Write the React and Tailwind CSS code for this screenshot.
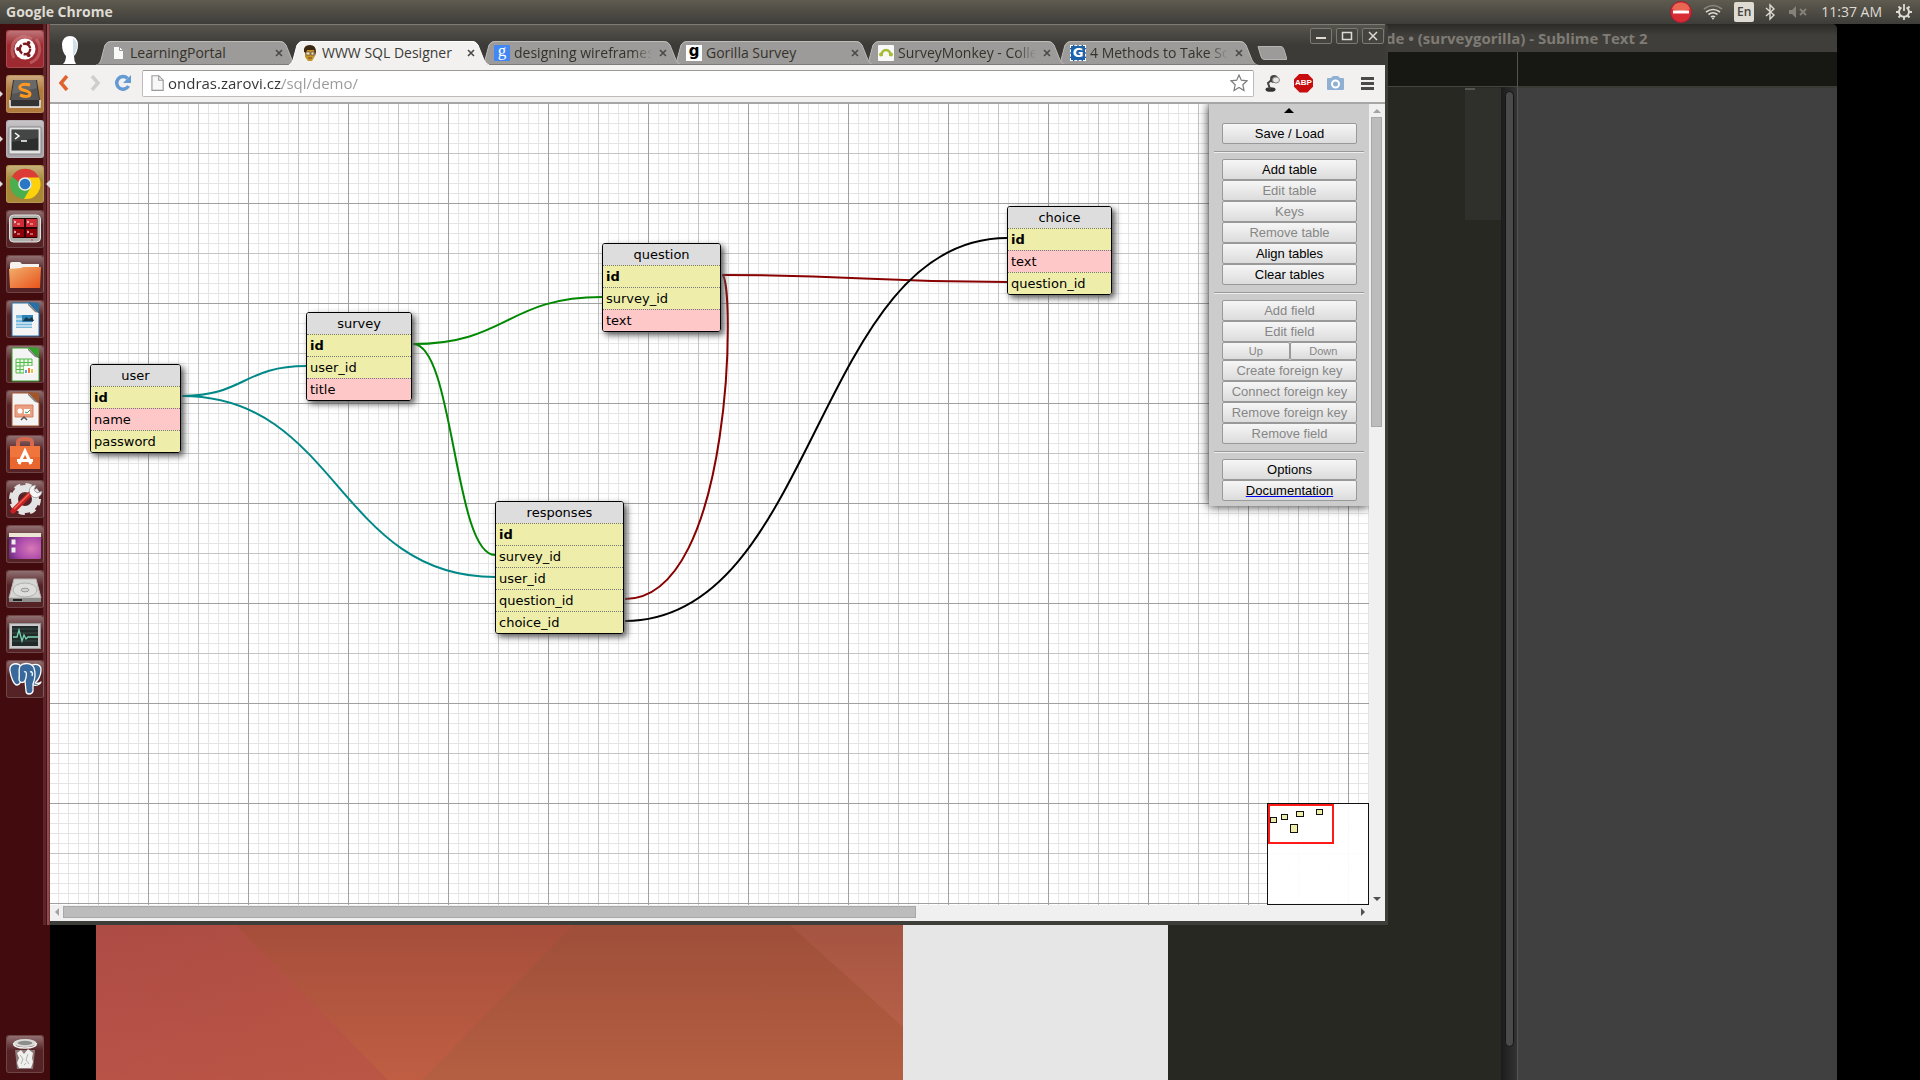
import React from "react";

const UI = "font-['Open_Sans','Noto_Sans',sans-serif]";

/* ---------- launcher ---------- */

function Tile({ label, tint = "bg-white/10", running, active, children }) {
  return (
    <li className="relative h-[38px] w-full pl-[6px]">
      {running && (
        <svg className="absolute left-0 top-[15px]" width="4" height="8" viewBox="0 0 4 8"><path d="M0 1l3 3-3 3z" fill="#ddd" /></svg>
      )}
      {active && (
        <svg className="absolute right-0 top-[15px]" width="4" height="8" viewBox="0 0 4 8"><path d="M4 0L0 4l4 4z" fill="#ddd" /></svg>
      )}
      <button aria-label={label} className={`block h-[38px] w-[38px] rounded-[3px] border border-white/15 ${tint}`}>
        <span className="block h-full w-full rounded-[3px] bg-linear-to-b from-white/35 to-transparent to-40%">
          <svg width="36" height="36" viewBox="1 1 36 36">{children}</svg>
        </span>
      </button>
    </li>
  );
}

function Doc({ color, children }) {
  return (
    <>
      <path d="M6 3h17l10 10v23H6z" fill="#f4f4f4" stroke={color} />
      <path d="M22 2l11 11V3z" fill={color} />
      <path d="M22 3l11 10-4-1-7-7z" fill="#333" opacity=".6" />
      {children}
    </>
  );
}

function Launcher() {
  return (
    <nav aria-label="Launcher" className="relative z-20 flex w-[50px] shrink-0 flex-col justify-between bg-[#420b0e] pt-[6px] pb-[7px]">
      <div className="absolute top-0 right-0 bottom-[155px] flex w-[7px]">
        <span className="w-[3px] bg-[#5a2629]" />
        <span className="w-px bg-[#471013]" />
        <span className="w-[2px] bg-[#8d4d50]" />
        <span className="w-px bg-[#7b3337]" />
      </div>
      <ul className="relative flex flex-col gap-[7px]">
        <Tile label="Dash" tint="bg-[#9c2a30]">
          <path d="M8 28C3 18 8 7 20 6M30 9c6 8 5 20-6 24M6 16c3-8 12-12 20-7" fill="none" stroke="#d98b8f" strokeWidth="3" opacity=".45" />
          <circle cx="19" cy="19" r="10.5" fill="#fff" />
          <circle cx="19" cy="19" r="5.2" fill="none" stroke="#7c1a20" strokeWidth="2.4" strokeDasharray="9.4 1.5" />
          <circle cx="12" cy="19" r="1.9" fill="#7c1a20" /><circle cx="22.6" cy="12.8" r="1.9" fill="#7c1a20" /><circle cx="22.6" cy="25.2" r="1.9" fill="#7c1a20" />
        </Tile>
        <Tile label="Sublime Text" tint="bg-[#b07a3c]" running>
          <path d="M7 5h24l4 27H3z" fill="#333" /><path d="M4 25v7h30v-7" fill="none" stroke="#f4f4f4" strokeWidth="1.5" />
          <path d="M8 5h22l3 20H5z" fill="#555" /><path d="M8 5h22l1 8L6 19z" fill="#777" opacity=".6" />
          <path d="M24 10c-8-2-11 1-10 3 1 3 10 2 10 6 0 3-5 3-10 1" fill="none" stroke="#ff9a1f" strokeWidth="3" />
        </Tile>
        <Tile label="Terminal" tint="bg-[#aaa5aa]" running>
          <rect x="3" y="7" width="32" height="27" rx="1" fill="#e3e3e3" stroke="#888" />
          <rect x="5.500" y="9.500" width="27" height="21" fill="#2c2e2d" /><path d="M6 10h26v8L6 22z" fill="#555" opacity=".6" />
          <path d="M9 13l4 3-4 3M15 21h6" fill="none" stroke="#fff" strokeWidth="1.5" />
        </Tile>
        <Tile label="Google Chrome" tint="bg-[#a98736]" running active>
          <circle cx="19" cy="19" r="15" fill="#4bae4f" />
          <path d="M6 11.500A15 15 0 0 1 33 13H19a6.500 6.500 0 0 0-6 4z" fill="#dd3b36" />
          <path d="M19 12.500h14A15 15 0 0 1 18 34l7-12a6.500 6.500 0 0 0-6-9.500z" fill="#fdd20d" />
          <circle cx="19" cy="19" r="6.800" fill="#eee" /><circle cx="19" cy="19" r="5.300" fill="#2a77c6" />
        </Tile>
        <Tile label="Terminator">
          <rect x="3.500" y="5" width="31" height="27" rx="4" fill="#aeb0ac" stroke="#e3e3e0" />
          <rect x="6.500" y="8" width="25" height="20" rx="1" fill="#2a0000" />
          <path d="M7 9h11v8H7zM20 9h11v8H20z" fill="#d02c36" /><path d="M7 19h11v8H7zM20 19h11v8H20z" fill="#8e0008" />
          <path d="M8 11l2 1-2 1M11 14h3M21 11l2 1-2 1M24 14h3M8 21l2 1-2 1M11 24h3M21 21l2 1-2 1M24 24h3" stroke="#fff" fill="none" strokeWidth=".8" />
          <path d="M25 30h2" stroke="#f33" />
        </Tile>
        <Tile label="Files">
          <path d="M4 9q0-2 2-2h8l2 2h17v6H4z" fill="#f5f2f0" />
          <path d="M3 14l12-1 2-1h18l-1 21H4z" fill="url(#folder)" />
        </Tile>
        <Tile label="LibreOffice Writer">
          <Doc color="#2672a8"><path d="M10 15h16v13H10z" fill="#7bb9dc" /><path d="M16 15h11v7H16z" fill="#2b83b8" /><path d="M17 21l3-4 3 2 3-2 2 4z" fill="#17374a" /><path d="M10 19h6M10 23h17M10 26h17" stroke="#fff" /></Doc>
        </Tile>
        <Tile label="LibreOffice Calc">
          <Doc color="#35a22c"><path d="M10 14h16v14H10z" fill="#e8f8e5" stroke="#55b84a" /><path d="M10 17.500h16M10 21h16M10 24.500h16M14 14v14M18 14v14M22 14v14" stroke="#55b84a" /><path d="M18 21h10v8H18z" fill="#fff" /><path d="M20 28v-3" stroke="#5ba3dd" strokeWidth="2" /><path d="M23 28v-5" stroke="#f27a3c" strokeWidth="2" /><path d="M26 28v-4" stroke="#e8c23a" strokeWidth="2" /></Doc>
        </Tile>
        <Tile label="LibreOffice Impress">
          <Doc color="#a3552a"><path d="M9 15h18v12H9z" fill="#eba083" stroke="#d87e5c" /><circle cx="14" cy="21" r="2.500" fill="#fff" /><path d="M18 19h6v5h-6z" fill="#fff" /><path d="M19 22l2 1 3-3" stroke="#3b9a46" fill="none" /><path d="M15 30l3-3 3 3" stroke="#555" fill="none" strokeWidth="1.500" /></Doc>
        </Tile>
        <Tile label="Software Center">
          <path d="M12 13V7q0-3 7-3t7 3v6" fill="none" stroke="#d4694d" strokeWidth="4" />
          <path d="M4 11h30v23H4z" fill="#e9672f" /><path d="M4 11h30v11H4z" fill="#f5834a" opacity=".5" />
          <path d="M13 29l6-13 6 13M11 25.500h16" fill="none" stroke="#fff" strokeWidth="3" />
        </Tile>
        <Tile label="System Settings">
          <circle cx="19" cy="19" r="10.500" fill="none" stroke="#e4e4e4" strokeWidth="7" /><circle cx="19" cy="19" r="14" fill="none" stroke="#e4e4e4" strokeWidth="4" strokeDasharray="6 5" />
          <path d="M7 31L25 13" stroke="#c92121" strokeWidth="5" strokeLinecap="round" /><path d="M8 29L23 14" stroke="#ef6a5a" strokeWidth="1.500" />
          <path d="M24 14c-2-5 1-9 6-9l-2 5 3 3 5-2c0 5-5 8-9 6z" fill="#f6f6f6" stroke="#888" strokeWidth=".7" />
        </Tile>
        <Tile label="Unity Tweak Tool">
          <rect x="3" y="8" width="32" height="26" rx="1" fill="url(#purple)" /><path d="M3 8h32v4H3z" fill="#ece7d5" />
          <rect x="5.500" y="14.500" width="4" height="5" fill="#eee" /><rect x="5.500" y="22.500" width="4" height="5" fill="#eee" />
        </Tile>
        <Tile label="Drive">
          <path d="M8 9h22l5 19H3z" fill="#d5d5d3" stroke="#b5b5b3" /><path d="M3 28h32v4H3z" fill="#8f908e" /><path d="M7 29h9v2H7z" fill="#222" />
          <ellipse cx="19" cy="20" rx="12" ry="7" fill="#dededc" stroke="#b0b0ae" /><ellipse cx="19" cy="20" rx="4" ry="1.800" fill="#d0d0d0" stroke="#999" />
        </Tile>
        <Tile label="System Monitor">
          <rect x="3.500" y="8.500" width="31" height="25" fill="#c9c9c9" stroke="#999" /><rect x="6" y="11" width="26" height="20" fill="#1f2a29" />
          <path d="M6 14h26M6 18h26M6 26h26" stroke="#3b4a49" /><path d="M7 22h4l2-7 3 11 2-6 2 4 2-2h10" fill="none" stroke="#79d3b0" strokeWidth="1.300" />
        </Tile>
        <Tile label="pgAdmin III">
          <g fill="#38699a" stroke="#fff" strokeWidth="1.300" strokeLinejoin="round">
            <path d="M24 6c5-3 11-2 11 4 0 5-3 11-6 13 2 1 5 0 6-1-1 3-5 4-8 3z" />
            <path d="M14 5C8 2 3 5 4 11c1 7 4 14 7 14 3 0 3-3 5-5z" />
            <path d="M14 6c4-4 12-3 14 2 2 6 1 11-1 16v7c-1 4-7 4-7 0l-1-10c-3 3-6 1-6-2 1-5-1-9 1-13z" />
            <path d="M18 12c3-2 3 4 1 9M24 12c2-1 3 1 2 4" fill="none" />
          </g>
        </Tile>
      </ul>
      <ul className="relative">
        <Tile label="Trash">
          <path d="M9 15h20l-2 19H11z" fill="#9c8f90" opacity=".8" />
          <ellipse cx="19" cy="8" rx="11.500" ry="4" fill="#dcdddb" />
          <ellipse cx="19" cy="8" rx="7.500" ry="2.200" fill="#8d8e8c" />
          <path d="M7.500 8q0 5 11.500 5t11.500-5" fill="none" stroke="#f5f5f5" strokeWidth="1.500" />
          <path d="M11 18l4-3 3 4 4-5 5 4-1 5 1 4-2 6H13l-2-5 2-5z" fill="#efefed" />
          <path d="M14 20l3 4-2 5M22 19l-2 6 3 4M18 30l2-2" fill="none" stroke="#b4b4b2" />
        </Tile>
      </ul>
      <svg width="0" height="0" className="absolute">
        <defs>
          <linearGradient id="folder" x1="0" y1="0" x2="1" y2="1"><stop stopColor="#f1b06e" /><stop offset="1" stopColor="#e8521b" /></linearGradient>
          <radialGradient id="purple" cx=".7" cy=".6" r=".8"><stop stopColor="#d979b6" /><stop offset=".6" stopColor="#a646a9" /><stop offset="1" stopColor="#5c2a78" /></radialGradient>
        </defs>
      </svg>
    </nav>
  );
}

/* ---------- top menu bar ---------- */

function MenuBar() {
  return (
    <header className={`flex h-6 shrink-0 items-center justify-between bg-linear-to-b from-[#5f5b50] to-[#3e3d39] text-[#dfdbd2] ${UI}`}>
      <h1 className="pl-[6px] text-[14px] leading-6 font-bold">Google Chrome</h1>
      <div className="flex items-center gap-[11px] pr-[8px]">
        <svg width="22" height="22" viewBox="0 0 22 22"><circle cx="11" cy="11" r="10.500" fill="#d92b33" stroke="#a81d35" /><path d="M2 8a9.500 9.500 0 0 1 18 0q-9 4-18 0" fill="#f0825f" opacity=".7" /><path d="M3 9.500h16v3H3z" fill="#fff" /></svg>
        <svg width="20" height="16" viewBox="0 0 20 16" fill="none" strokeWidth="1.600"><path d="M1 5q9-7 18 0" stroke="#8b877e" /><path d="M3 8q7-5 14 0M5.500 10.500q4.500-3.500 9 0M8 13q2-1.500 4 0" stroke="#dfdbd2" /><circle cx="10" cy="14.500" r="1" fill="#dfdbd2" /></svg>
        <span className="h-5 w-5 rounded-[2px] bg-[#dfdbd2] text-center text-[12px] leading-[20px] font-semibold text-[#45443f]">En</span>
        <svg width="10" height="18" viewBox="0 0 10 18" fill="none" stroke="#dfdbd2" strokeWidth="1.400"><path d="M1 5l8 7-4 4V2l4 4-8 7" /></svg>
        <svg className="ml-[3px]" width="18" height="12" viewBox="0 0 18 12"><path d="M0 4h3l4-4v12L3 8H0z" fill="#85827a" /><path d="M11 3l6 6M17 3l-6 6" stroke="#85827a" strokeWidth="1.800" /></svg>
        <time className="ml-[3px] text-[14px] leading-6 whitespace-nowrap">11:37 AM</time>
        <svg className="ml-[3px]" width="16" height="16" viewBox="0 0 16 16" fill="none" stroke="#dfdbd2"><path d="M5.500 3.500a5 5 0 1 0 5 0" strokeWidth="2" /><path d="M8 0v7" strokeWidth="1.800" /><path d="M0 8h3M13 8h3M2.500 13.500l2-2M13.500 13.500l-2-2M8 13v3M2.500 2.500l2 2M13.500 2.500l-2 2" strokeWidth="1.800" /></svg>
      </div>
    </header>
  );
}

/* ---------- browser chrome ---------- */

const PageIcon = ({ w = 16 }) => (
  <svg width={w} height={w} viewBox="0 0 16 16"><path d="M3.500 1.500h6l4 4v9h-10z" fill="#f8f8f8" stroke="#999" /><path d="M9.500 1.500v4h4" fill="none" stroke="#999" /></svg>
);

const tabs = [
  { title: "LearningPortal", z: "z-[5]", icon: <PageIcon /> },
  {
    title: "WWW SQL Designer", z: "z-[8]", active: true,
    icon: <svg width="16" height="16" viewBox="0 0 16 16"><path d="M0 0h16v16H0z" fill="#f5f3ee" /><path d="M3 4h9l1 7-3 5H6l-3-4z" fill="#c4942f" /><path d="M2 7q-1-7 6-7 6 0 6 7l-1 4-1-6H5L4 8z" fill="#3b2712" /><path d="M4 7h4v3H4zM9 7h3v3H9z" fill="#e9dfc8" stroke="#6b4c22" strokeWidth=".7" /><path d="M6 13h4" stroke="#6e4c17" /></svg>,
  },
  { title: "designing wireframes", z: "z-[4]", icon: <span className="block h-4 w-4 rounded-[1px] bg-[#4387f4] text-center font-['Liberation_Serif',serif] text-[17px] leading-[12px] text-white">g</span> },
  { title: "Gorilla Survey", z: "z-[3]", icon: <span className="block h-4 w-4 bg-white text-center font-['DejaVu_Sans',sans-serif] text-[15px] leading-[13px] font-bold text-black">g</span> },
  { title: "SurveyMonkey - Collec", z: "z-[2]", icon: <svg width="16" height="16" viewBox="0 0 16 16"><rect width="16" height="16" rx="1" fill="#f8f8f8" /><path d="M3.500 11C3 3 13 3 12.500 11" fill="none" stroke="#a5bd35" strokeWidth="2.600" /><circle cx="3" cy="9.500" r="2" fill="#a5bd35" /><circle cx="13" cy="9.500" r="2" fill="#a5bd35" /></svg> },
  { title: "4 Methods to Take Scr", z: "z-[1]", icon: <span className="block h-4 w-4 border border-dashed border-white bg-[#1d62a8] text-center font-['DejaVu_Sans',sans-serif] text-[13px] leading-[14px] font-bold text-white">G</span> },
];

function Tab({ title, icon, active, z }) {
  return (
    <div className={`relative h-6 w-48 ${z}`}>
      <svg className="absolute top-0 left-0" width="202" height="24" viewBox="0 0 202 24">
        <path d="M0 24Q3 24 5 19L9 4Q11 0 15 0H184Q188 0 190 4L196 19Q198 24 202 24z" fill={active ? "#f2f1f0" : "#9c9b99"} />
        <path d="M1 24Q4 23 5 19L9 4Q11 .5 15 .5H184Q188 .5 190 4L196 19Q198 23 201 24" fill="none" stroke={active ? "#fff" : "#bcbbb9"} />
        {!active && <path d="M0 23.500h202" stroke="#7c7b79" />}
      </svg>
      <div className="relative flex h-6 items-center pl-[14px]">
        <button className={`flex items-center gap-1 text-left text-[14px] leading-6 whitespace-nowrap ${UI} ${active ? "text-[#3c3b37]" : "text-[#35322a]"}`}>
          <span className="w-4">{icon}</span>
          <span className={`w-[141px] ${title.length > 18 ? "[mask-image:linear-gradient(90deg,#000_84%,transparent_98%)]" : ""}`}>{title}</span>
        </button>
        <button aria-label={`Close ${title}`} className="flex h-4 w-4 shrink-0 items-center justify-center">
          <svg width="8" height="8" viewBox="0 0 8 8"><path d="M1 1l6 6M7 1L1 7" stroke="#4a4945" strokeWidth="1.600" /></svg>
        </button>
      </div>
    </div>
  );
}

function WinButton({ label, children }) {
  return (
    <button aria-label={label} className="flex h-4 w-[22px] items-center justify-center rounded-[2px] border border-[#7b7a74] bg-[#45443f]">
      <svg width="12" height="12" viewBox="0 0 12 12" fill="none" stroke="#dfdbd2" strokeWidth="2">{children}</svg>
    </button>
  );
}

function TitleBar() {
  return (
    <div className="flex h-[41px] shrink-0 items-end justify-between border-t border-[#7d7b75] bg-linear-to-b from-[#57554d] to-[#3c3b37] to-50%">
      <div className="flex items-end">
        <svg className="mr-4 ml-[10px]" width="20" height="30" viewBox="0 0 20 30"><path d="M3 29q3-3 3-8-4-4-4-12Q3 1 10 1t8 8q0 8-4 12 0 5 2 8z" fill="#fff" /><path d="M13 3q5 4 4 9-1 6-4 9V14z" fill="#cfe0ea" /></svg>
        {tabs.map((t) => <Tab key={t.title} {...t} />)}
        <button aria-label="New tab" className="mb-[5px] ml-[9px]">
          <svg width="30" height="14" viewBox="0 0 30 14"><path d="M1 .5h23q2 0 3 3l3 10H7q-2 0-3-3z" fill="#9c9b99" stroke="#b5b4b2" /></svg>
        </button>
      </div>
      <div className="flex gap-1 self-start pt-[3px] pr-px">
        <WinButton label="Minimize"><path d="M1 8h10" /></WinButton>
        <WinButton label="Maximize"><path d="M1.500 2.500h9v7h-9z" strokeWidth="1.500" /></WinButton>
        <WinButton label="Close window"><path d="M2 2l8 8M10 2l-8 8" strokeWidth="1.500" /></WinButton>
      </div>
    </div>
  );
}

function Toolbar() {
  return (
    <div className="flex h-[39px] shrink-0 items-center border-b-2 border-[#a6a6a6] bg-[#f2f1f0] pr-[11px] pb-px pl-[8px]">
      <button aria-label="Back"><svg width="12" height="16" viewBox="0 0 12 16"><path d="M9 1L3 8l6 7" fill="none" stroke="#e0622d" strokeWidth="3.500" /></svg></button>
      <button aria-label="Forward" className="ml-5"><svg width="12" height="16" viewBox="0 0 12 16"><path d="M2 1l6 7-6 7" fill="none" stroke="#cfcecc" strokeWidth="3.500" /></svg></button>
      <button aria-label="Reload" className="ml-3"><svg width="18" height="18" viewBox="0 0 18 18"><path d="M14.500 12A6.300 6.300 0 1 1 13.500 4.500" fill="none" stroke="#659bd3" strokeWidth="3.500" /><path d="M17 1v8H9z" fill="#659bd3" /></svg></button>
      <div className="ml-[10px] flex h-[27px] flex-1 items-center rounded-[2px] border border-[#bdbcba] border-t-[#9b9a98] bg-white px-[5px]">
        <PageIcon w={18} />
        <input aria-label="Address" readOnly value="ondras.zarovi.cz/sql/demo/" className={`ml-[2px] h-6 min-w-0 flex-1 bg-[linear-gradient(90deg,#333_114px,#999_114px)] bg-clip-text text-[15px] text-transparent outline-none ${UI}`} />
        <button aria-label="Bookmark this page"><svg width="18" height="18" viewBox="0 0 18 18"><path d="M9 1l2.300 5.200 5.700.6-4.200 3.900 1.200 5.800L9 13.500l-5 3 1.200-5.800L1 6.800l5.700-.6z" fill="#fff" stroke="#7d7d7d" strokeWidth="1.200" /></svg></button>
      </div>
      <button aria-label="Desk lamp" className="ml-[11px]"><svg width="15" height="18" viewBox="0 0 15 18"><ellipse cx="5.500" cy="15.500" rx="5" ry="2.300" fill="#333" /><path d="M5 15l-2-6 6-5" fill="none" stroke="#444" strokeWidth="2" /><circle cx="9" cy="5" r="4" fill="#444" /><ellipse cx="11" cy="6" rx="3.500" ry="3" fill="#e7e7e7" stroke="#888" /></svg></button>
      <button aria-label="Adblock Plus" className="ml-[14px] flex h-[19px] w-[19px] items-center justify-center bg-[#c70d0d] font-['Liberation_Sans',sans-serif] text-[8px] font-bold text-white [clip-path:polygon(30%_0,70%_0,100%_30%,100%_70%,70%_100%,30%_100%,0_70%,0_30%)]">ABP</button>
      <button aria-label="Screen capture" className="ml-[14px]"><svg width="17" height="16" viewBox="0 0 17 16"><path d="M1 3h3l2-2h5l2 2h3q1 0 1 1v10q0 1-1 1H1q-1 0-1-1V4q0-1 1-1z" fill="#8fb0d2" /><circle cx="8.500" cy="9" r="3.500" fill="none" stroke="#fff" strokeWidth="2" /></svg></button>
      <button aria-label="Menu" className="ml-[17px]"><svg width="13" height="13" viewBox="0 0 13 13"><path d="M0 1.500h13M0 6.500h13M0 11.500h13" stroke="#4b4a49" strokeWidth="3" /></svg></button>
    </div>
  );
}

/* ---------- database diagram ---------- */

const Y = "bg-[#eeeeaa]";
const R = "bg-[#ffc8c8]";
const entities = [
  { name: "user", place: "left-[40px] top-[260px] w-[91px]", fields: [["id", Y], ["name", R], ["password", Y]] },
  { name: "survey", place: "left-[256px] top-[208px] w-[106px]", fields: [["id", Y], ["user_id", Y], ["title", R]] },
  { name: "question", place: "left-[552px] top-[139px] w-[119px]", fields: [["id", Y], ["survey_id", Y], ["text", R]] },
  { name: "choice", place: "left-[957px] top-[102px] w-[105px]", fields: [["id", Y], ["text", R], ["question_id", Y]] },
  { name: "responses", place: "left-[445px] top-[397px] w-[129px]", fields: [["id", Y], ["survey_id", Y], ["user_id", Y], ["question_id", Y], ["choice_id", Y]] },
];

function Entity({ name, place, fields }) {
  return (
    <table className={`absolute ${place} border-separate border-spacing-0 overflow-hidden rounded-[3px] border border-black font-['DejaVu_Sans',sans-serif] text-[13px] leading-[21px] text-black shadow-[3px_3px_6px_#555]`}>
      <thead><tr><th className="h-[21px] bg-[#dddddd] p-0 text-center font-normal">{name}</th></tr></thead>
      <tbody>
        {fields.map(([f, bg], i) => (
          <tr key={f}><td className={`h-[22px] border-t border-dotted border-[#777] ${bg} py-0 pr-0 pl-[3px] ${i === 0 ? "font-bold" : ""}`}>{f}</td></tr>
        ))}
      </tbody>
    </table>
  );
}

function Relations() {
  return (
    <svg className="absolute top-0 left-0" width="1319" height="801" viewBox="50 104 1319 801" fill="none" strokeWidth="2">
      <g stroke="#008888"><path d="M182 396C244 396 244 366 306 366" /><path d="M182 396C338 396 338 577 495 577" /></g>
      <g stroke="#008800"><path d="M413 344C507 344 507 297 602 297" /><path d="M413 344C454 344 454 555 495 555" /></g>
      <g stroke="#880000"><path d="M722 275C864 275 864 282 1007 282" /><path d="M722 275C735 275 735 599 625 599" /></g>
      <path d="M625 621C816 621 816 238 1007 238" stroke="#000" />
    </svg>
  );
}

function PanelButton({ children, disabled, small }) {
  return (
    <button disabled={disabled} className={`flex-1 rounded-[2px] border border-[#999] bg-linear-to-b from-[#f6f6f6] to-[#dcdcdc] text-center ${small ? "h-[18px] text-[11px] leading-[16px]" : "h-[21px] text-[13px] leading-[19px]"} ${disabled ? "text-[#868686]" : "text-black"}`}>
      {children}
    </button>
  );
}

const Rule = () => <hr className="mx-[5px] mt-[7px] mb-[6px] h-[2px] border-t border-b border-t-[#999] border-b-[#eee]" />;
const Group = ({ children }) => <div className="flex flex-col pr-3 pl-[13px]">{children}</div>;

function Panel() {
  return (
    <aside className="absolute top-0 right-0 w-40 bg-[#cccccc] pb-[5px] font-['Liberation_Sans',Arial,sans-serif] shadow-[0_0_10px_#222]">
      <button aria-label="Collapse" className="flex h-[19px] w-full justify-center pt-[4px]">
        <svg width="10" height="5" viewBox="0 0 10 5"><path d="M0 5l5-5 5 5z" /></svg>
      </button>
      <Group><PanelButton>Save / Load</PanelButton></Group>
      <Rule />
      <Group>
        <PanelButton>Add table</PanelButton>
        <PanelButton disabled>Edit table</PanelButton>
        <PanelButton disabled>Keys</PanelButton>
        <PanelButton disabled>Remove table</PanelButton>
        <PanelButton>Align tables</PanelButton>
        <PanelButton>Clear tables</PanelButton>
      </Group>
      <Rule />
      <Group>
        <PanelButton disabled>Add field</PanelButton>
        <PanelButton disabled>Edit field</PanelButton>
        <div className="flex"><PanelButton disabled small>Up</PanelButton><PanelButton disabled small>Down</PanelButton></div>
        <PanelButton disabled>Create foreign key</PanelButton>
        <PanelButton disabled>Connect foreign key</PanelButton>
        <PanelButton disabled>Remove foreign key</PanelButton>
        <PanelButton disabled>Remove field</PanelButton>
      </Group>
      <Rule />
      <Group>
        <PanelButton>Options</PanelButton>
        <a href="#documentation" className="h-[21px] rounded-[2px] border border-[#999] bg-linear-to-b from-[#f6f6f6] to-[#dcdcdc] text-center text-[13px] leading-[19px] text-black underline decoration-[#0000ee]">Documentation</a>
      </Group>
    </aside>
  );
}

const mini = ["left-[2px] top-[13px] w-[7px] h-[6px]", "left-[13px] top-[10px] w-[7px] h-[6px]", "left-[28px] top-[7px] w-[8px] h-[6px]", "left-[48px] top-[5px] w-[7px] h-[6px]", "left-[22px] top-[20px] w-[8px] h-[9px]"];

function MiniMap() {
  return (
    <div className="absolute right-0 bottom-0 h-[102px] w-[102px] border border-[#111] bg-white/95">
      <div className="absolute top-0 left-0 h-10 w-[66px] border-2 border-[#ff1a1a]" />
      {mini.map((m) => <div key={m} className={`absolute border border-[#111] bg-[#eeeeaa] ${m}`} />)}
    </div>
  );
}

const Arrow = ({ d, label, fill = "#505050" }) => (
  <button aria-label={label} className="flex h-[13px] w-[13px] items-center justify-center"><svg width="8" height="8" viewBox="0 0 8 8"><path d={d} fill={fill} /></svg></button>
);

function Page() {
  return (
    <div className="grid min-h-0 flex-1 grid-cols-[1fr_16px] grid-rows-[1fr_16px] bg-[#f0f0f0]">
      <main className="relative overflow-hidden bg-white bg-[linear-gradient(90deg,transparent_99px,#a0a0a0_99px),linear-gradient(transparent_99px,#a0a0a0_99px),linear-gradient(90deg,transparent_49px,#c4c4c4_49px,#c4c4c4_50px,transparent_50px),linear-gradient(transparent_49px,#c4c4c4_49px,#c4c4c4_50px,transparent_50px),linear-gradient(90deg,transparent_9px,#e5e5e5_9px),linear-gradient(transparent_9px,#e5e5e5_9px)] bg-[size:100px_100px,100px_100px,100px_100px,100px_100px,10px_10px,10px_10px] bg-position-[-1px_0]">
        <Relations />
        {entities.map((e) => <Entity key={e.name} {...e} />)}
        <Panel />
        <MiniMap />
      </main>
      <div className="flex flex-col items-center">
        <Arrow label="Scroll up" d="M0 6l4-4 4 4z" fill="#a3a3a3" />
        <div className="flex w-full flex-1 justify-center pr-[2px]"><div className="h-[40%] w-[11px] border border-[#a8a8a8] bg-[#bcbcbc]" /></div>
        <Arrow label="Scroll down" d="M0 2h8L4 6z" />
      </div>
      <div className="flex items-center pb-[2px]">
        <Arrow label="Scroll left" d="M6 0v8L2 4z" fill="#a3a3a3" />
        <div className="flex-1"><div className="h-3 w-[66%] border border-[#a8a8a8] bg-[#bcbcbc]" /></div>
        <Arrow label="Scroll right" d="M2 0v8l4-4z" />
      </div>
    </div>
  );
}

function Browser() {
  return (
    <section aria-label="WWW SQL Designer" className="absolute top-0 right-[532px] bottom-[155px] left-0 flex flex-col rounded-tr-[4px] border-r-[3px] border-b-4 border-[#3d3d3a] bg-[#3c3b37]">
      <TitleBar />
      <Toolbar />
      <Page />
    </section>
  );
}

/* ---------- windows behind the browser ---------- */

function Sublime() {
  return (
    <section aria-label="Sublime Text 2" className="absolute top-0 right-[83px] bottom-0 left-[1118px] flex flex-col overflow-hidden rounded-tr-[5px] bg-[#272822]">
      <div className={`h-7 shrink-0 bg-linear-to-b from-[#2b2a27] to-[#3f3e3a] to-40% pl-[201px] text-[15px] leading-[29px] font-bold whitespace-nowrap text-[#7f7c75] ${UI}`}>code • (surveygorilla) - Sublime Text 2</div>
      <div className="flex min-h-0 flex-1">
        <div className="flex w-[349px] flex-col">
          <div className="h-[35px] border-b border-[#45453f] bg-[#171814]" />
          <div className="flex flex-1 justify-end">
            <div className="mt-px h-[132px] w-9 bg-[#2f302b]"><div className="h-[2px] w-[10px] bg-[#55564f]" /></div>
            <div className="w-4 bg-linear-to-r from-[#1c1c1c] to-[#333] pt-[4px] pb-[33px] pl-[4px]"><div className="h-full w-[9px] rounded-full border border-[#151515] bg-[#4a4a4a]" /></div>
          </div>
        </div>
        <div className="flex flex-1 flex-col border-l border-[#555550]">
          <div className="h-[36px] border-b-2 border-[#3b3b35] bg-[#171814]" />
          <div className="flex-1 bg-[#404040]" />
        </div>
      </div>
    </section>
  );
}

function Wallpaper() {
  return (
    <div className="absolute right-[752px] bottom-0 left-[46px] flex h-[155px] bg-[#e6e6e6]">
      <svg className="h-full w-[807px]" viewBox="0 0 807 155" preserveAspectRatio="none">
        <defs>
          <linearGradient id="wa" x1="0" y1="0" x2="1" y2="0"><stop stopColor="#ad4b45" /><stop offset=".4" stopColor="#b05040" /></linearGradient>
          <linearGradient id="wb" x1="0" y1="0" x2="0" y2="1"><stop stopColor="#a64e3b" /><stop offset="1" stopColor="#bf5e43" /></linearGradient>
          <linearGradient id="wc" x1="0" y1="0" x2="0" y2="1"><stop stopColor="#9e4e39" /><stop offset="1" stopColor="#b55f42" /></linearGradient>
          <linearGradient id="wd" x1="0" y1="0" x2="0" y2="1"><stop stopColor="#a55442" /><stop offset="1" stopColor="#b65f48" /></linearGradient>
          <linearGradient id="wl" x1="0" y1="0" x2="0" y2="1"><stop stopColor="#d96a50" stopOpacity="0" /><stop offset="1" stopColor="#d96a50" stopOpacity=".25" /></linearGradient>
        </defs>
        <path d="M0 0h807v155H0z" fill="url(#wa)" />
        <path d="M0 0h292v155H0z" fill="url(#wl)" />
        <path d="M140 0h340L328 155H292z" fill="url(#wb)" />
        <path d="M477 0h330v155H326z" fill="url(#wc)" />
        <path d="M694 0h113v102z" fill="url(#wd)" />
      </svg>
    </div>
  );
}

export default function App() {
  return (
    <div className="flex h-screen flex-col overflow-hidden bg-black">
      <MenuBar />
      <div className="flex min-h-0 flex-1">
        <Launcher />
        <div className="relative min-w-0 flex-1 overflow-hidden">
          <Wallpaper />
          <Sublime />
          <Browser />
        </div>
      </div>
    </div>
  );
}
